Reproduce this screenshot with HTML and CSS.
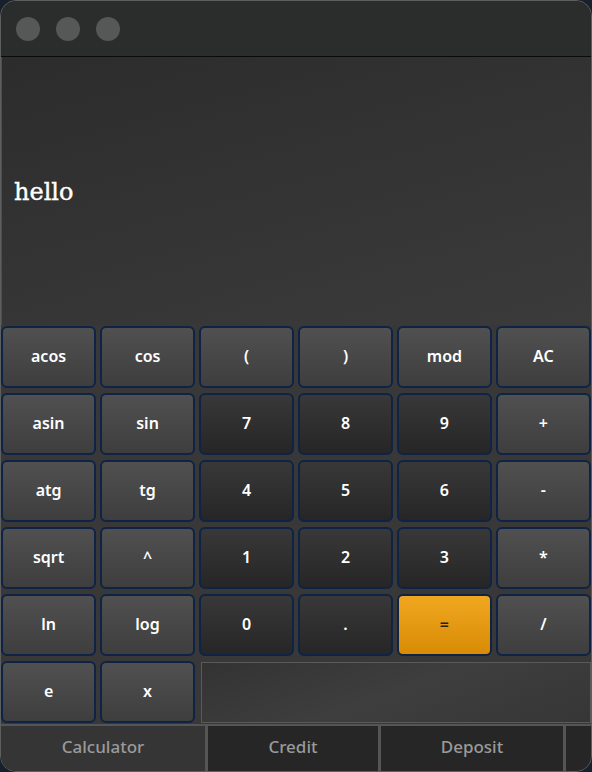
FILE: index.html
```html
<!DOCTYPE html>
<html>
<head>
<meta charset="utf-8">
<link rel="stylesheet" href="styles.css">
</head>
<body>
<div class="window">
  <div class="titlebar">
    <span class="light"></span><span class="light"></span><span class="light"></span>
  </div>
  <div class="display"><span class="expr">hello</span></div>
  <div class="keys">
    <button class="key fn">acos</button>
    <button class="key fn">cos</button>
    <button class="key fn">(</button>
    <button class="key fn">)</button>
    <button class="key fn">mod</button>
    <button class="key fn">AC</button>

    <button class="key fn">asin</button>
    <button class="key fn">sin</button>
    <button class="key num">7</button>
    <button class="key num">8</button>
    <button class="key num">9</button>
    <button class="key fn">+</button>

    <button class="key fn">atg</button>
    <button class="key fn">tg</button>
    <button class="key num">4</button>
    <button class="key num">5</button>
    <button class="key num">6</button>
    <button class="key fn">-</button>

    <button class="key fn">sqrt</button>
    <button class="key fn">^</button>
    <button class="key num">1</button>
    <button class="key num">2</button>
    <button class="key num">3</button>
    <button class="key fn">*</button>

    <button class="key fn">ln</button>
    <button class="key fn">log</button>
    <button class="key num">0</button>
    <button class="key num">.</button>
    <button class="key eq">=</button>
    <button class="key fn">/</button>

    <button class="key fn">e</button>
    <button class="key fn">x</button>
    <div class="xfield"></div>
  </div>
  <div class="tabs">
    <div class="tab active">Calculator</div>
    <div class="tab credit">Credit</div>
    <div class="tab deposit">Deposit</div>
    <div class="tab rest"></div>
  </div>
</div>
</body>
</html>
```
FILE: styles.css
```css
html, body {
  margin: 0;
  padding: 0;
  background: #18202c;
}
.window {
  width: 592px;
  height: 772px;
  box-sizing: border-box;
  border: 1px solid #5e5e5e;
  border-radius: 16px;
  overflow: hidden;
  background: #363636;
  display: flex;
  flex-direction: column;
}
.titlebar {
  height: 55px;
  background: #2b2d2c;
  border-bottom: 1px solid #0a0a0a;
  display: flex;
  align-items: center;
  gap: 16px;
  padding-left: 15px;
  flex-shrink: 0;
}
.light {
  width: 24px;
  height: 24px;
  border-radius: 50%;
  background: #565757;
}
.display {
  height: 268px;
  flex-shrink: 0;
  background: linear-gradient(165deg, #2c2c2c 0%, #333333 45%, #3b3b3b 100%);
  display: flex;
  align-items: center;
  padding-left: 12px;
  border-left: 1px solid #4e4e4e;
}
.expr {
  font-family: "DejaVu Serif", serif;
  font-size: 24px;
  color: #ffffff;
  margin-top: 1px;
  -webkit-text-stroke: 0.4px #ffffff;
}
.keys {
  display: grid;
  grid-template-columns: repeat(6, 1fr);
  grid-template-rows: repeat(6, 62.4px);
  gap: 4.6px 3.8px;
  padding: 1px 0 0 0;
  background: #383838;
  height: 399px;
  box-sizing: border-box;
  flex-shrink: 0;
}
.key {
  margin: 0;
  border: 2px solid #0e2345;
  border-radius: 6px;
  font-family: "Noto Sans", sans-serif;
  font-weight: 600;
  font-size: 16px;
  color: #ffffff;
  padding: 0 0 3px 0;
}
.fn {
  background: linear-gradient(180deg, #505050 0%, #3e3e3e 100%);
}
.num {
  background: linear-gradient(180deg, #383838 0%, #262626 100%);
}
.eq {
  background: linear-gradient(180deg, #f0a820 0%, #d98b05 100%);
  color: #222222;
}
.xfield {
  grid-column: 3 / span 4;
  border: 1px solid #5a5a5a;
  background: linear-gradient(160deg, #333333 0%, #3e3e3e 50%, #363636 100%);
  margin: 1px 0 0 2px;
}
.tabs {
  flex: 1;
  display: flex;
  border-top: 2px solid #555555;
  background: #262626;
}
.tab {
  display: flex;
  align-items: center;
  justify-content: center;
  font-family: "Noto Sans", sans-serif;
  font-weight: 500;
  font-size: 17px;
  color: #9a9a9a;
  border-right: 3px solid #555555;
  padding-bottom: 5px;
}
.active {
  width: 204px;
  background: #353535;
}
.credit { width: 170px; }
.deposit { width: 182px; }
.rest { flex: 1; border-right: none; }
```
